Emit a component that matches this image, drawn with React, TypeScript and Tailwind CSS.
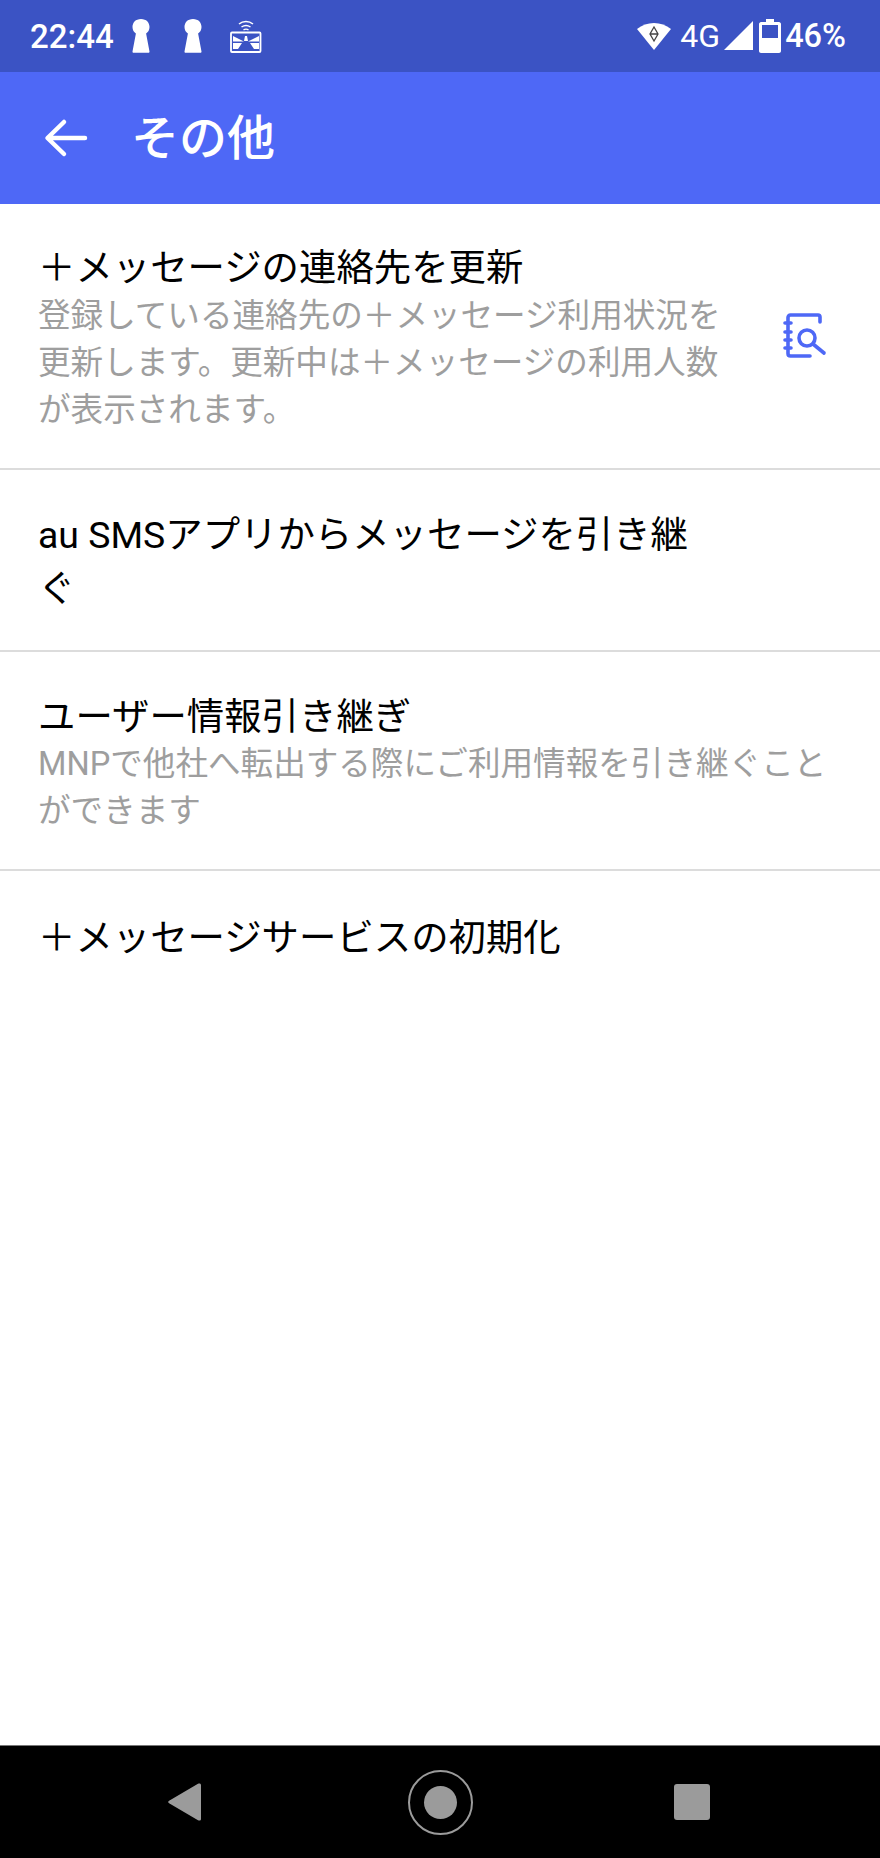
import React from "react";

const FONT = "font-['Roboto','Noto_Sans_CJK_JP',sans-serif]";
const DIVIDER = "border-b-2 border-[#dcdcdc]";

const Keyhole = () => (
  <svg width="20" height="34" viewBox="0 0 20 34" fill="white">
    <path d="M10 0C4.600 0 1.500 3.600 1.500 8c0 3 1.400 5.200 3.400 6.500L1.500 32.500c0 .8.300 1.300 1.100 1.300h14.800c.8 0 1.100-.5 1.100-1.300L15.100 14.500c2-1.300 3.400-3.500 3.400-6.500C18.500 3.600 15.400 0 10 0z" />
  </svg>
);

const CarWifi = () => (
  <svg width="32" height="34" viewBox="0 0 32 34" fill="none" stroke="white">
    <path d="M9 5c4-3.400 10-3.400 14 0" strokeWidth="1.500" />
    <path d="M11.500 8c2.800-2 6.200-2 9 0" strokeWidth="1.500" />
    <path d="M13.500 10.800c1.500-.8 3.500-.8 5 0" strokeWidth="1.400" />
    <rect x="1" y="13.500" width="29.500" height="19.500" rx="1" strokeWidth="1.800" />
    <path d="M3 17l11 5.500H3zM29 17l-11 5.500h11zM3 24h9l-4 6H3zM29 24h-9l4 6h5zM15 17h2l1 5h-4z" fill="white" stroke="none" />
  </svg>
);

const BookSearch = () => (
  <svg width="44" height="46" viewBox="0 0 44 46" fill="none" stroke="#4e68f6" strokeWidth="3.600" strokeLinecap="round" strokeLinejoin="round">
    <path d="M37 10V5c0-1.200-.8-2-2-2H7.500C6 3 5 4 5 5.500v36C5 43 6 44 7.500 44H27" />
    <path d="M2 11h6M2 20h6M2 28h6M2 36h6" />
    <circle cx="24" cy="26" r="8" />
    <path d="M30 32l11 9" />
  </svg>
);

type RowProps = {
  title: string;
  sub?: string;
  narrow?: boolean;
  icon?: boolean;
  className?: string;
  titleClass?: string;
  subClass?: string;
};

const Row = ({ title, sub, narrow, icon, className, titleClass, subClass }: RowProps) => (
  <div className={`flex items-center pl-[38px] pr-[38px] ${className ?? ""}`}>
    <div className={narrow ? "w-[684px]" : "flex-1"}>
      <p className={`text-[37.4px] text-black ${titleClass ?? "leading-[52px]"}`}>{title}</p>
      {sub && <p className={`text-[32.6px] leading-[47px] text-[#9e9e9e] ${subClass ?? ""}`}>{sub}</p>}
    </div>
    {icon && (
      <div className="ml-auto mr-[15px] mb-[7px]">
        <BookSearch />
      </div>
    )}
  </div>
);

export default function App() {
  return (
    <div className={`${FONT} w-[880px] h-[1858px] flex flex-col bg-white overflow-hidden`}>
      <div className="h-[72px] bg-[#3b53c4] flex items-center pl-[30px] pr-[34px] text-white shrink-0">
        <span className="text-[33px] font-medium leading-none w-[83px]">22:44</span>
        <div className="ml-[18px] mr-[32px]"><Keyhole /></div>
        <Keyhole />
        <div className="ml-[27px]"><CarWifi /></div>
        <div className="ml-auto flex items-center">
          <svg width="36" height="32" viewBox="0 0 36 32">
            <path d="M18 30L1 9c9.500-8 24.500-8 34 0z" fill="white" />
            <path d="M18 7l-4 7 4 7 4-7zM14 14h8" fill="none" stroke="#444" strokeWidth="1.300" />
          </svg>
          <span className="text-[32px] ml-[8px] leading-none">4G</span>
          <svg width="30" height="30" viewBox="0 0 30 30" className="ml-[4px]"><path d="M29 0v29H0z" fill="white" /></svg>
          <svg width="22" height="34" viewBox="0 0 22 34" className="ml-[5px]">
            <path d="M7 0h8v3h5c1 0 2 1 2 2v27c0 1-1 2-2 2H2c-1 0-2-1-2-2V5c0-1 1-2 2-2h5z" fill="white" />
            <rect x="3" y="6" width="16" height="13" fill="#3b53c4" />
          </svg>
          <span className="text-[32.5px] font-medium ml-[4px] leading-none">46%</span>
        </div>
      </div>
      <div className="h-[132px] bg-[#4e68f6] flex items-center pl-[44px] text-white shrink-0">
        <svg width="44" height="40" viewBox="0 0 44 40" fill="none" stroke="white" strokeWidth="4.500" strokeLinecap="round" strokeLinejoin="round">
          <path d="M41 20H4M20 4L3.500 20 20 36" />
        </svg>
        <span className="ml-[43px] text-[48px] font-medium leading-none pt-[2px]">その他</span>
      </div>
      <div className="flex-1">
        <Row
          title="＋メッセージの連絡先を更新"
          sub="登録している連絡先の＋メッセージ利用状況を更新します。更新中は＋メッセージの利用人数が表示されます。"
          narrow
          icon
          className={`pt-[38px] pb-[34px] ${DIVIDER}`}
          subClass="-mt-[1px]"
        />
        <Row
          title="au SMSアプリからメッセージを引き継ぐ"
          narrow
          className={`pt-[38px] pb-[34px] ${DIVIDER}`}
          titleClass="leading-[54px]"
        />
        <Row
          title="ユーザー情報引き継ぎ"
          sub="MNPで他社へ転出する際にご利用情報を引き継ぐことができます"
          className={`pt-[39px] pb-[34px] ${DIVIDER}`}
          subClass="-mt-[2px]"
        />
        <Row title="＋メッセージサービスの初期化" className="pt-[41px]" />
      </div>
      <div className="h-[113px] bg-black border-t border-[#777] flex items-center shrink-0">
        <div className="flex w-full items-center justify-between pl-[168px] pr-[170px]">
          <svg width="33" height="38" viewBox="0 0 33 38"><path d="M1.500 17.500L30 .8c1.500-.8 3-.3 3 1.200v34c0 1.500-1.500 2-3 1.200L1.500 20.500c-1.800-1-1.800-2 0-3z" fill="#9b9b9b" /></svg>
          <div className="ml-[5px] w-[65px] h-[65px] rounded-full border-2 border-[#9b9b9b] flex items-center justify-center">
            <div className="w-[33px] h-[33px] rounded-full bg-[#9b9b9b]" />
          </div>
          <div className="w-[36px] h-[36px] rounded-[3px] bg-[#9b9b9b]" />
        </div>
      </div>
    </div>
  );
}
